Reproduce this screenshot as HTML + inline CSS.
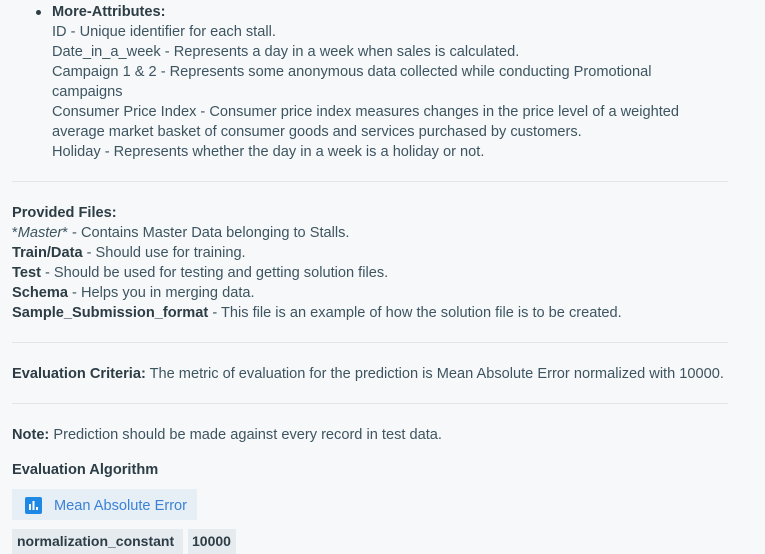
<!DOCTYPE html>
<html><head><style>
body{margin:0;background:#f7f8fa;font-family:"Liberation Sans",sans-serif;font-size:14.6px;color:#3d5560;width:765px;height:554px;overflow:hidden;position:relative}
.l{position:absolute;left:12px;line-height:20px;white-space:nowrap}
b{color:#2c3d45}
.hr{position:absolute;left:12px;width:716px;height:1px;background:#e3e7eb}
</style></head><body>
<div class="l" style="top:2px;left:52px"><b>More-Attributes:</b><br>ID - Unique identifier for each stall.<br>Date_in_a_week - Represents a day in a week when sales is calculated.<br>Campaign 1 &amp; 2 - Represents some anonymous data collected while conducting Promotional<br>campaigns<br>Consumer Price Index - Consumer price index measures changes in the price level of a weighted<br>average market basket of consumer goods and services purchased by customers.<br>Holiday - Represents whether the day in a week is a holiday or not.</div>
<div style="position:absolute;left:36px;top:10px;width:5px;height:5px;border-radius:50%;background:#2c3d45"></div>
<div class="hr" style="top:181px"></div>
<div class="l" style="top:203px"><b>Provided Files:</b><br>*<i>Master</i>* - Contains Master Data belonging to Stalls.<br><b>Train/Data</b> - Should use for training.<br><b>Test</b> - Should be used for testing and getting solution files.<br><b>Schema</b> - Helps you in merging data.<br><b>Sample_Submission_format</b> - This file is an example of how the solution file is to be created.</div>
<div class="hr" style="top:342px"></div>
<div class="l" style="top:364px"><b>Evaluation Criteria:</b> The metric of evaluation for the prediction is Mean Absolute Error normalized with 10000.</div>
<div class="hr" style="top:403px"></div>
<div class="l" style="top:425px"><b>Note:</b> Prediction should be made against every record in test data.</div>
<div class="l" style="top:460px"><b>Evaluation Algorithm</b></div>
<div style="position:absolute;left:12px;top:489px;width:185px;height:31px;background:#e6eef6"></div>
<svg style="position:absolute;left:25px;top:497px" width="17" height="17" viewBox="0 0 17 17"><rect width="17" height="17" rx="2" fill="#1e88e5"/><rect x="4" y="7" width="2" height="6" fill="#fff"/><rect x="7.5" y="4" width="2" height="9" fill="#fff"/><rect x="11" y="10" width="2" height="3" fill="#fff"/></svg>
<div class="l" style="top:496px;left:54px;color:#3b82d6">Mean Absolute Error</div>
<div style="position:absolute;left:12px;top:529px;width:171px;height:25px;background:#e6ebf0"></div>
<div style="position:absolute;left:188px;top:529px;width:48px;height:25px;background:#e6ebf0"></div>
<div class="l" style="top:531px;left:17px;font-size:14px"><b>normalization_constant</b></div>
<div class="l" style="top:531px;left:192px;font-size:14px"><b>10000</b></div>
</body></html>
